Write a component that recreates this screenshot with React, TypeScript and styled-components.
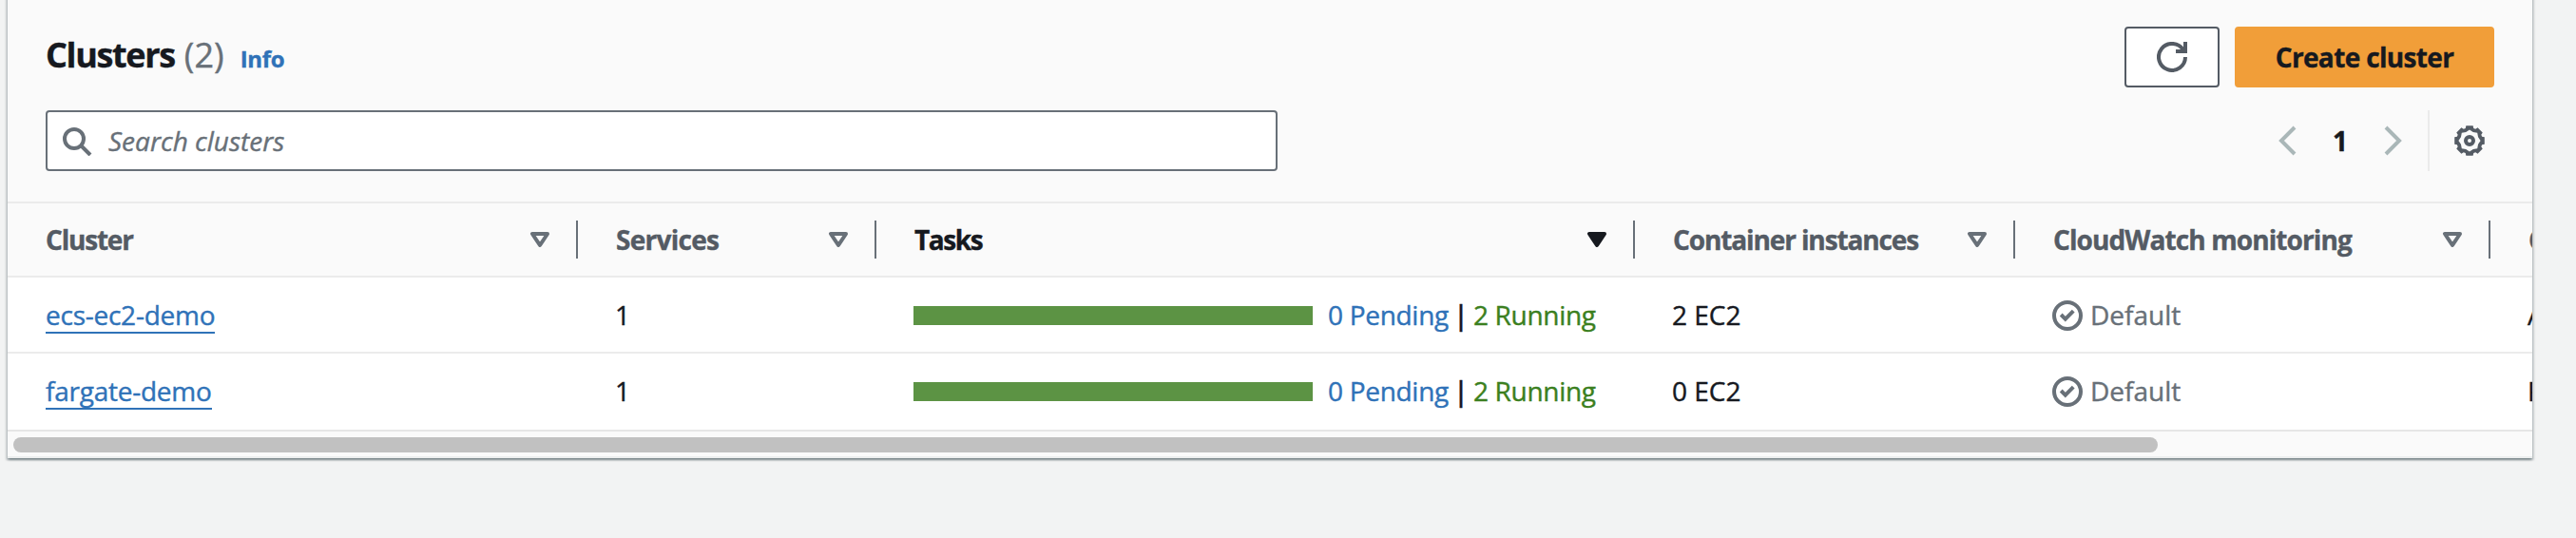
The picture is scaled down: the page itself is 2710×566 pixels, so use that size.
import React from 'react';
import styled, { createGlobalStyle } from 'styled-components';

const c = {
  ink: '#16191f',
  heading: '#545b64',
  muted: '#687078',
  link: '#2f72b8',
  line: '#ebebeb',
  success: '#3b7f20',
};

const GlobalStyle = createGlobalStyle`
  * { box-sizing: border-box; }
  body {
    margin: 0;
    height: 566px;
    overflow: hidden;
    background: #f2f3f3;
    color: ${c.ink};
    font-family: 'Open Sans', 'Noto Sans', sans-serif;
    font-size: 28px;
    line-height: 40px;
    -webkit-text-stroke: 0.4px currentColor;
  }
`;

const Page = styled.main`
  padding: 0 46px 84px 8px;
`;

const Card = styled.section`
  margin-top: -20px;
  padding-top: 20px;
  height: 502px;
  background: #fafafa;
  box-shadow:
    0 2px 2px rgba(0, 28, 36, 0.3),
    2px 2px 2px rgba(0, 28, 36, 0.15),
    -2px 2px 2px rgba(0, 28, 36, 0.15);
`;

const Header = styled.header`
  display: flex;
  flex-direction: column;
  gap: 24px;
  height: 214px;
  padding: 28px 40px 0;
  border-bottom: 2px solid ${c.line};
`;

const HeaderRow = styled.div`
  display: flex;
  align-items: center;
  justify-content: space-between;
  height: 64px;
`;

const TitleGroup = styled.div`
  display: flex;
  align-items: baseline;
  padding-bottom: 2px;
`;

const Title = styled.h1`
  margin: 0;
  font-size: 36px;
  line-height: 44px;
  font-weight: 700;
  letter-spacing: -1.35px;
`;

const Count = styled.span`
  margin-left: 10px;
  font-size: 36px;
  line-height: 44px;
  color: ${c.muted};
`;

const InfoLink = styled.a`
  margin-left: 17px;
  font-size: 24px;
  font-weight: 700;
  letter-spacing: -0.3px;
  color: ${c.link};
`;

const Actions = styled.div`
  display: flex;
  gap: 16px;
`;

const Button = styled.button<{ $primary?: boolean }>`
  display: flex;
  align-items: center;
  justify-content: center;
  width: ${p => (p.$primary ? 273 : 100)}px;
  height: 64px;
  padding: ${p => (p.$primary ? '0 0 1px' : '0')};
  border: 2px solid ${p => (p.$primary ? '#f19e39' : c.heading)};
  border-radius: 4px;
  background: ${p => (p.$primary ? '#f19e39' : '#fff')};
  color: ${p => (p.$primary ? c.ink : c.heading)};
  font: inherit;
  font-weight: 700;
  letter-spacing: -0.65px;
`;

const SearchBox = styled.label`
  display: flex;
  align-items: center;
  gap: 17px;
  width: 1296px;
  height: 64px;
  padding-left: 15px;
  border: 2px solid ${c.muted};
  border-radius: 4px;
  background: #fff;
  color: ${c.muted};
  font-style: italic;
`;

const Tools = styled.div`
  display: flex;
  align-items: center;
  height: 64px;
  color: ${c.heading};
`;

const PageArrow = styled.span`
  display: flex;
  color: #aab7b8;
`;

const PageNumber = styled.span`
  width: 80px;
  text-align: center;
  font-weight: 700;
  color: ${c.ink};
  padding-bottom: 1px;
`;

const Preferences = styled.span`
  display: flex;
  align-items: center;
  height: 64px;
  margin-left: 20px;
  padding: 0 10px 0 26px;
  border-left: 2px solid ${c.line};
`;

const Table = styled.div`
  overflow: hidden;
`;

const Columns = styled.div`
  display: grid;
  grid-template-columns: 600px 314px 798px 400px 500px 44px;
`;

const HeadRow = styled(Columns)`
  height: 78px;
  border-bottom: 2px solid ${c.line};
`;

const HeadCell = styled.div<{ $active?: boolean; $last?: boolean }>`
  display: flex;
  align-items: center;
  justify-content: space-between;
  height: 40px;
  margin-top: 18px;
  padding: 0 22px 0 40px;
  border-right: ${p => (p.$last ? 'none' : `2px solid ${c.muted}`)};
  color: ${p => (p.$active ? c.ink : c.heading)};
  svg { color: ${p => (p.$active ? c.ink : c.muted)}; }
`;

const Label = styled.span<{ $tracking: number }>`
  font-weight: 700;
  white-space: nowrap;
  letter-spacing: ${p => p.$tracking}px;
`;

const Row = styled(Columns)<{ $last?: boolean }>`
  height: ${p => (p.$last ? 82 : 80)}px;
  background: #fff;
  border-bottom: 2px solid ${p => (p.$last ? '#e6e6e6' : c.line)};
  padding-bottom: ${p => (p.$last ? 2 : 0)}px;
`;

const Cell = styled.div`
  display: flex;
  align-items: center;
  padding-left: 39px;
  white-space: nowrap;
`;

const NameCell = styled(Cell)`
  padding-left: 40px;
`;

const ClusterLink = styled.a`
  margin-top: 2px;
  line-height: 36px;
  letter-spacing: -0.25px;
  color: ${c.link};
  border-bottom: 2px solid ${c.link};
`;

const TaskBar = styled.span`
  width: 420px;
  height: 20px;
  margin-top: 2px;
  margin-right: 16px;
  background: #5c9344;
`;

const TaskCount = styled.span<{ $kind: 'pending' | 'running' }>`
  letter-spacing: -0.3px;
  color: ${p => (p.$kind === 'pending' ? c.link : c.success)};
`;

const Pipe = styled.span`
  width: 26px;
  text-align: center;
  font-weight: 600;
`;

const Status = styled.span`
  display: flex;
  align-items: center;
  gap: 8px;
  color: ${c.muted};
  svg { margin-top: 2px; }
`;

const ScrollTrack = styled.div`
  height: 28px;
  padding: 6px 6px 0;
  border-bottom: 2px solid #eceeee;
`;

const ScrollThumb = styled.div`
  width: 2256px;
  height: 16px;
  border-radius: 8px;
  background: #c1c1c1;
`;

const Svg = ({ children }: { children: React.ReactNode }) => (
  <svg width={32} height={32} viewBox="0 0 16 16" fill="none" stroke="currentColor" strokeWidth="2">
    {children}
  </svg>
);

const RefreshIcon = () => (
  <Svg>
    <path d="M15 8a7 7 0 1 1-1.1-3.8" />
    <path d="M10 5h5V0" />
  </Svg>
);

const SearchIcon = () => (
  <Svg>
    <circle cx="6.5" cy="7" r="5" />
    <path d="m10 10.5 5 5" />
  </Svg>
);

const polar = (r: number, deg: number) => {
  const a = (deg * Math.PI) / 180;
  return `${(8 + r * Math.sin(a)).toFixed(2)} ${(8 - r * Math.cos(a)).toFixed(2)}`;
};

const teeth = [0, 45, 90, 135, 180, 225, 270, 315];
const gearRim = teeth.flatMap(d => [polar(6.9, d - 18), polar(8.1, d - 13), polar(8.1, d + 13), polar(6.9, d + 18)]);
const gearHollow = teeth.flatMap(d => [polar(5.8, d), polar(4.9, d + 22.5)]);

const GearIcon = () => (
  <Svg>
    <path
      d={`M${gearRim.join('L')}ZM${gearHollow.join('L')}Z`}
      fill="currentColor"
      fillRule="evenodd"
      stroke="none"
    />
    <circle cx="8" cy="8" r="2" />
  </Svg>
);

const CheckIcon = () => (
  <Svg>
    <circle cx="8" cy="8" r="7" />
    <path d="M4.6 7.5l2.3 2.3 4.2-4.2" />
  </Svg>
);

const SortIcon = ({ filled }: { filled?: boolean }) => (
  <Svg>
    <path d="M4 5h8l-4 6z" strokeLinejoin="round" fill={filled ? 'currentColor' : 'none'} />
  </Svg>
);

const columns = [
  { label: 'Cluster', tracking: -1.2 },
  { label: 'Services', tracking: -0.73 },
  { label: 'Tasks', tracking: -1.4, active: true },
  { label: 'Container instances', tracking: -1.12 },
  { label: 'CloudWatch monitoring', tracking: -0.9 },
];

const clusters = [
  { name: 'ecs-ec2-demo', services: 1, pending: 0, running: 2, instances: '2 EC2', monitoring: 'Default', provider: 'A' },
  { name: 'fargate-demo', services: 1, pending: 0, running: 2, instances: '0 EC2', monitoring: 'Default', provider: 'F' },
];

export default function App() {
  return (
    <Page>
      <GlobalStyle />
      <Card>
        <Header>
          <HeaderRow>
            <TitleGroup>
              <Title>Clusters</Title>
              <Count>(2)</Count>
              <InfoLink>Info</InfoLink>
            </TitleGroup>
            <Actions>
              <Button aria-label="Refresh"><RefreshIcon /></Button>
              <Button $primary>Create cluster</Button>
            </Actions>
          </HeaderRow>
          <HeaderRow>
            <SearchBox>
              <SearchIcon />
              <span>Search clusters</span>
            </SearchBox>
            <Tools>
              <PageArrow><Svg><path d="M12 1 5 8l7 7" /></Svg></PageArrow>
              <PageNumber>1</PageNumber>
              <PageArrow><Svg><path d="m4 1 7 7-7 7" /></Svg></PageArrow>
              <Preferences><GearIcon /></Preferences>
            </Tools>
          </HeaderRow>
        </Header>
        <Table>
          <HeadRow>
            {columns.map(col => (
              <HeadCell key={col.label} $active={col.active}>
                <Label $tracking={col.tracking}>{col.label}</Label>
                <SortIcon filled={col.active} />
              </HeadCell>
            ))}
            <HeadCell $last><Label $tracking={0}>C</Label></HeadCell>
          </HeadRow>
          {clusters.map((row, i) => (
            <Row key={row.name} $last={i === clusters.length - 1}>
              <NameCell><ClusterLink>{row.name}</ClusterLink></NameCell>
              <Cell>{row.services}</Cell>
              <Cell>
                <TaskBar />
                <TaskCount $kind="pending">{row.pending} Pending</TaskCount>
                <Pipe>|</Pipe>
                <TaskCount $kind="running">{row.running} Running</TaskCount>
              </Cell>
              <Cell>{row.instances}</Cell>
              <Cell><Status><CheckIcon />{row.monitoring}</Status></Cell>
              <Cell>{row.provider}</Cell>
            </Row>
          ))}
        </Table>
        <ScrollTrack><ScrollThumb /></ScrollTrack>
      </Card>
    </Page>
  );
}
